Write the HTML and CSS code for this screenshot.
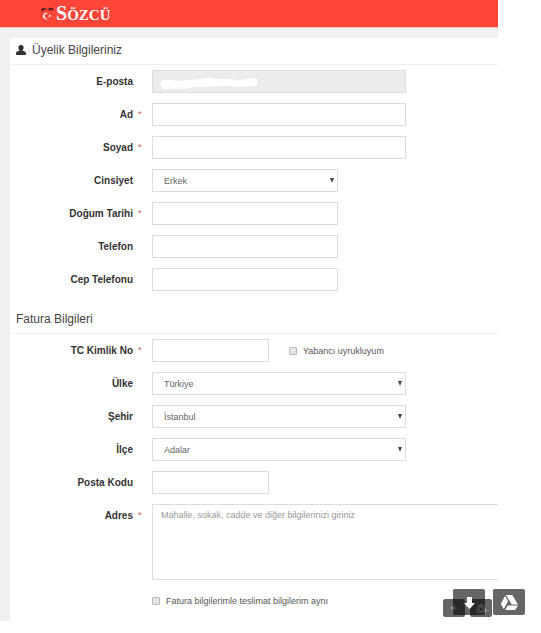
FILE: index.html
```html
<!DOCTYPE html>
<html lang="tr">
<head>
<meta charset="utf-8">
<meta name="viewport" content="width=device-width, initial-scale=1">
<title>Sözcü - Üyelik Bilgileriniz</title>
<link rel="stylesheet" href="styles.css">
</head>
<body>
<div class="page">
  <header class="topbar">
    <a class="logo" href="#">
      <svg class="logo-mark" viewBox="0 0 15 16" aria-hidden="true">
        <path d="M1 3.500 L3 1.500 L5 2.500 L6.500 2 L6 4 L3.500 4.500 L2 6Z M8 3 L10 1.500 L13.500 2.500 L13 5 L11 4 L9 5Z" fill="#65201d"/>
        <path d="M8 7.500 A3.200 3.200 0 1 0 8.500 12.500 A2.700 2.700 0 1 1 8 7.500Z" fill="#fff"/>
        <path d="M9.500 8 L10.200 9.300 L11.600 9.500 L10.500 10.300 L10.500 11.500 L9.500 10.700 L8.300 10.900 L8.900 9.800Z" fill="#ffd8d2"/>
      </svg>
      <span class="logo-text"><span class="logo-initial">S</span>ÖZCÜ</span>
    </a>
  </header>
  <main class="content">
    <form class="panel">
      <section>
        <h2 class="heading">
          <svg class="user-icon" viewBox="0 0 10 10" aria-hidden="true"><path d="M5 0C3.200 0 2.300 1.200 2.400 2.700C2.500 4 3 4.900 3.600 5.400C2.300 6 0 6.200 0 8.500V9.200Q0 10 .8 10H9.200Q10 10 10 9.200V8.500C10 6.200 7.700 6 6.400 5.400C7 4.900 7.500 4 7.600 2.700C7.700 1.200 6.800 0 5 0Z" fill="#333"/></svg>
          Üyelik Bilgileriniz
        </h2>
        <div class="rows">
          <div class="row"><label class="label" for="eposta">E-posta</label>
            <div class="field wide"><input class="control" id="eposta" type="email" disabled>
              <svg class="redaction" viewBox="0 0 98 14" aria-hidden="true"><path d="M1 4 Q8 2 17 4 L30 3 L42 2 Q50 -1 56 2 L66 2 L80 3 L96 1 Q99 5 96 9 L86 9 L78 10 L68 9 L57 9 L48 10 L36 10 L24 12 L3 12 Q-1 8 1 4Z" fill="#fff"/></svg>
            </div></div>
          <div class="row"><label class="label required" for="ad">Ad</label><input class="control wide" id="ad" type="text"></div>
          <div class="row"><label class="label required" for="soyad">Soyad</label><input class="control wide" id="soyad" type="text"></div>
          <div class="row"><label class="label" for="cinsiyet">Cinsiyet</label><div class="field select medium"><select class="control" id="cinsiyet"><option>Erkek</option></select></div></div>
          <div class="row"><label class="label required" for="dogum">Doğum Tarihi</label><input class="control medium" id="dogum" type="text"></div>
          <div class="row"><label class="label" for="telefon">Telefon</label><input class="control medium" id="telefon" type="tel"></div>
          <div class="row"><label class="label" for="cep">Cep Telefonu</label><input class="control medium" id="cep" type="tel"></div>
        </div>
      </section>
      <section>
        <h2 class="heading">Fatura Bilgileri</h2>
        <div class="rows">
          <div class="row"><label class="label required" for="tc">TC Kimlik No</label>
            <div class="inline"><input class="control narrow" id="tc" type="text"><label class="check"><input type="checkbox">Yabancı uyrukluyum</label></div></div>
          <div class="row"><label class="label" for="ulke">Ülke</label><div class="field select wide"><select class="control" id="ulke"><option>Türkiye</option></select></div></div>
          <div class="row"><label class="label" for="sehir">Şehir</label><div class="field select wide"><select class="control" id="sehir"><option>İstanbul</option></select></div></div>
          <div class="row"><label class="label" for="ilce">İlçe</label><div class="field select wide"><select class="control" id="ilce"><option>Adalar</option></select></div></div>
          <div class="row"><label class="label" for="posta">Posta Kodu</label><input class="control narrow" id="posta" type="text"></div>
          <div class="row"><label class="label required" for="adres">Adres</label><textarea class="control address" id="adres" placeholder="Mahalle, sokak, cadde ve diğer bilgilerinizi giriniz"></textarea></div>
          <div class="row"><label class="check same"><input type="checkbox">Fatura bilgilerimle teslimat bilgilerim aynı</label></div>
        </div>
      </section>
    </form>
  </main>
</div>
<div class="tools">
  <button class="tool small first" type="button" aria-label="Ekle"><svg viewBox="0 0 22 18"><path d="M11 6V12M8 9H14" stroke="#aaa" stroke-width="2"/></svg></button>
  <button class="tool small second" type="button" aria-label="Drive"><svg viewBox="0 0 22 18"><path d="M9 5H13L17 12L15 14H8L6 11Z M11 8L9 11H13Z" fill="#aaa" fill-rule="evenodd"/></svg></button>
  <button class="tool large download" type="button" aria-label="İndir"><svg viewBox="0 0 32 26"><path d="M14 8H19V14H22L16.500 20L11 14H14Z" fill="#fff"/></svg></button>
  <button class="tool large drive" type="button" aria-label="Drive'a kaydet"><svg viewBox="0 0 32 26"><path d="M12.800 6H19.200L25 15.500H18.800Z M12 7L15.100 12.200L10.800 20L7.800 15Z M14.800 16.500H25L22 21H12.200Z" fill="#fff"/></svg></button>
</div>
</body>
</html>
```
FILE: styles.css
```css
* { box-sizing: border-box; }

body {
  position: relative;
  min-height: 100vh;
  margin: 0;
  background: #fff;
  color: #555;
  font: 9px/12px "Liberation Sans", Arial, sans-serif;
}

.page { margin-right: 43px; }

.topbar {
  height: 28px;
  padding-left: 40px;
  background: #ff4438;
  border-bottom: 1px solid #f8c4bd;
}

.logo {
  display: inline-flex;
  align-items: center;
  gap: 1px;
  height: 27px;
  color: #fff;
  text-decoration: none;
}

.logo-mark { width: 15px; height: 16px; }
.logo-text { font: bold 15px/26px "Liberation Serif", serif; }
.logo-initial { font-size: 20px; }

.content {
  padding: 10px 0 0 10px;
  background: #f0f0f0;
}

.panel {
  padding-bottom: 14px;
  background: #fff;
}

.heading {
  display: flex;
  align-items: center;
  gap: 6px;
  height: 27px;
  margin: 0;
  padding: 0 6px 2px;
  border-bottom: 1px solid #f0f0f0;
  color: #444;
  font-size: 12px;
  font-weight: normal;
}

.user-icon { width: 10px; height: 10px; }

.rows {
  display: grid;
  gap: 10px;
  padding-top: 5px;
}

section + section { margin-top: 16px; }

.row {
  display: grid;
  grid-template-columns: 123px 1fr;
  column-gap: 19px;
  align-items: start;
}

.label {
  position: relative;
  color: #333;
  font-size: 10px;
  font-weight: bold;
  line-height: 23px;
  text-align: right;
}

.required::after {
  content: "*";
  position: absolute;
  left: 100%;
  margin-left: 5px;
  color: #d9534f;
  font-size: 9px;
  font-weight: normal;
}

.control {
  display: block;
  width: 100%;
  height: 23px;
  margin: 0;
  padding: 0 11px;
  border: 1px solid #ddd;
  border-radius: 0;
  background: #fff;
  color: #666;
  font: inherit;
  appearance: none;
}

.control:disabled { background: #ececec; }

.wide { width: 254px; }
.medium { width: 186px; }
.narrow { width: 117px; }
.field { position: relative; }

.select::after {
  content: "";
  position: absolute;
  top: 9px;
  right: 4px;
  border: solid transparent;
  border-width: 5px 2px 0;
  border-top-color: #444;
}

.redaction {
  position: absolute;
  top: 7px;
  left: 8px;
  width: 98px;
  height: 14px;
}

.inline { display: flex; align-items: center; gap: 20px; }

.check {
  display: flex;
  align-items: center;
  gap: 6px;
}

.check input {
  width: 8px;
  height: 8px;
  margin: 0;
  border: 1px solid #bbb;
  border-radius: 1px;
  background: #e4e4e4;
  appearance: none;
}

.same { grid-column: 2; padding-top: 5px; }

.address {
  height: 76px;
  padding: 4px 8px;
  border-right: 0;
  resize: none;
}

.address::placeholder { color: #999; opacity: 1; }

.tools {
  position: absolute;
  top: 589px;
  left: 443px;
  width: 82px;
  height: 28px;
}

.tool {
  position: absolute;
  padding: 0;
  border: 0;
  border-radius: 2px;
  background: rgba(0, 0, 0, 0.6);
}

.tool svg { display: block; width: 100%; height: 100%; }
.small { top: 10px; width: 22px; height: 18px; }
.large { top: 0; width: 32px; height: 26px; }
.first { left: 0; }
.second { left: 27px; }
.download { left: 10px; }
.drive { left: 50px; }
```
